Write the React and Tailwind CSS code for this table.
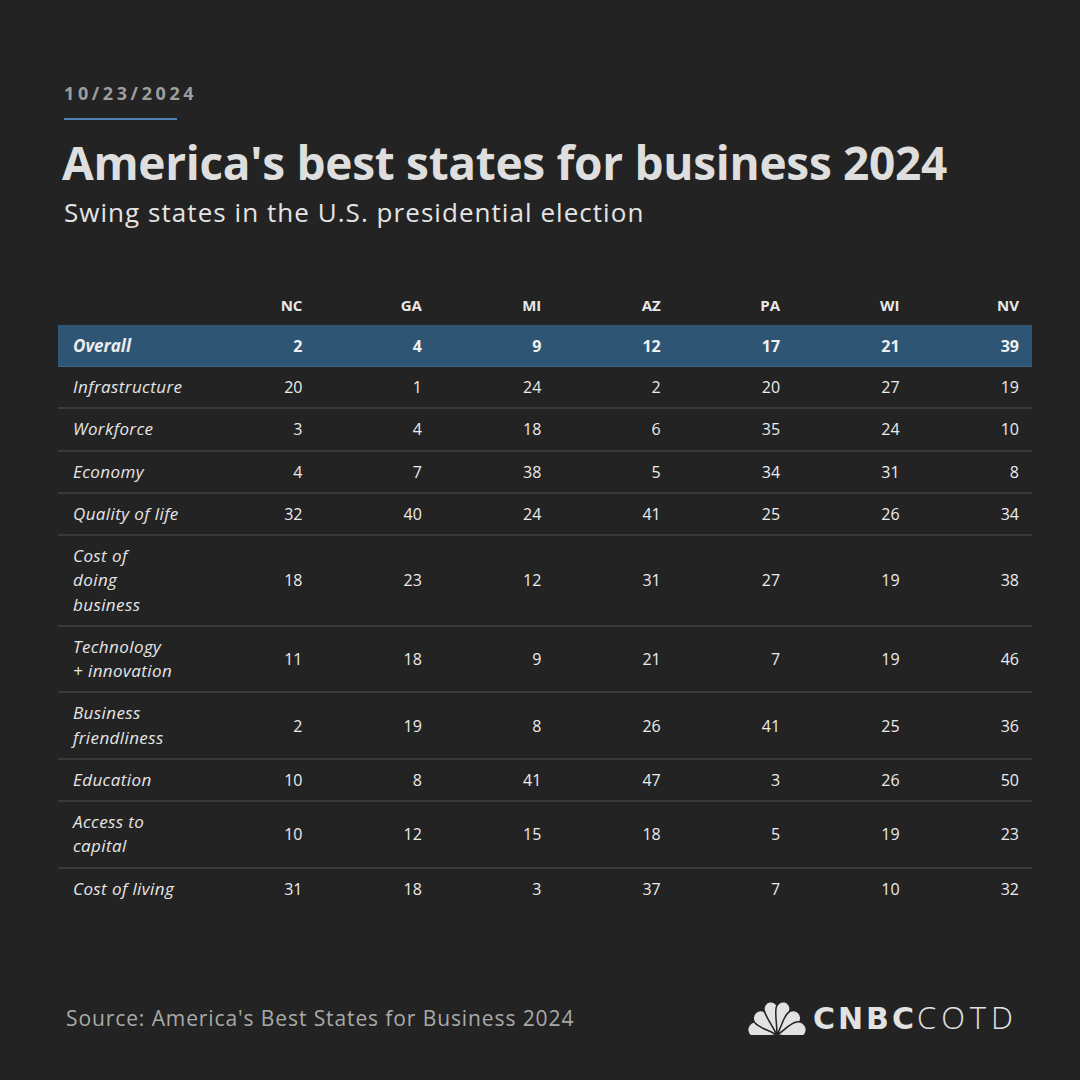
import React from "react";

const states = ["NC", "GA", "MI", "AZ", "PA", "WI", "NV"];

const rows = [
  { label: ["Infrastructure"], values: [20, 1, 24, 2, 20, 27, 19] },
  { label: ["Workforce"], values: [3, 4, 18, 6, 35, 24, 10] },
  { label: ["Economy"], values: [4, 7, 38, 5, 34, 31, 8] },
  { label: ["Quality of life"], values: [32, 40, 24, 41, 25, 26, 34] },
  { label: ["Cost of", "doing", "business"], values: [18, 23, 12, 31, 27, 19, 38] },
  { label: ["Technology", "+ innovation"], values: [11, 18, 9, 21, 7, 19, 46] },
  { label: ["Business", "friendliness"], values: [2, 19, 8, 26, 41, 25, 36] },
  { label: ["Education"], values: [10, 8, 41, 47, 3, 26, 50] },
  { label: ["Access to", "capital"], values: [10, 12, 15, 18, 5, 19, 23] },
  { label: ["Cost of living"], values: [31, 18, 3, 37, 7, 10, 32] },
];

const overall = [2, 4, 9, 12, 17, 21, 39];

function Feather({ angle, len, r }) {
  const d = `M0,0 C${-r * 0.4},${-len * 0.35} ${-r},${-(len - 2 * r)} ${-r},${-(len - r)} A${r},${r} 0 0 1 ${r},${-(len - r)} C${r},${-(len - 2 * r)} ${r * 0.4},${-len * 0.35} 0,0 Z`;
  return <path d={d} transform={`translate(30,34) rotate(${angle})`} fill="#e2e2e2" stroke="#232323" strokeWidth="1.5" />;
}

function Peacock() {
  return (
    <svg width="60" height="34" viewBox="0 0 60 34">
      <Feather angle={-76} len={30} r={8} />
      <Feather angle={-44} len={31} r={7.5} />
      <Feather angle={-13} len={34} r={7} />
      <Feather angle={13} len={34} r={7} />
      <Feather angle={44} len={31} r={7.5} />
      <Feather angle={76} len={30} r={8} />
    </svg>
  );
}

function App() {
  return (
    <div className="w-[1080px] h-[1080px] bg-[#232323] flex flex-col" style={{ fontFamily: "'Open Sans', Lato, sans-serif" }}>
      <div className="pl-[64px] pt-[81px]">
        <div className="text-[18px] leading-[24px] font-bold tracking-[3.6px] text-[#9e9e9e]">10/23/2024</div>
        <div className="mt-[13px] h-[2px] w-[113px] bg-[#4f80b3]" />
        <div className="mt-[14px] -ml-[2px] text-[46px] leading-[56px] font-bold text-[#dedede] tracking-[-0.3px]">
          America's best states for business 2024
        </div>
        <div className="mt-[7px] text-[26px] leading-[30px] text-[#e4e4e4] tracking-[1.05px]">
          Swing states in the U.S. presidential election
        </div>
      </div>

      <div className="mt-[68px] ml-[58px] w-[974px]">
        <div className="grid grid-cols-[138px_repeat(7,1fr)] pb-[10px]">
          <div />
          {states.map((s) => (
            <div key={s} className="text-right pr-[13px] text-[15px] leading-[20px] font-bold text-[#e8e8e8]">
              {s}
            </div>
          ))}
        </div>

        <div className="grid grid-cols-[138px_repeat(7,1fr)] items-center bg-[#2e5674] h-[42px] border-b border-[#3f6784]">
          <div className="pl-[15px] italic font-bold text-[17px] text-[#ececec]">Overall</div>
          {overall.map((v, i) => (
            <div key={i} className="text-right pr-[13px] font-bold text-[16px] text-[#f0f0f0]">
              {v}
            </div>
          ))}
        </div>

        {rows.map((row, idx) => (
          <div
            key={idx}
            className={
              "grid grid-cols-[138px_repeat(7,1fr)] items-center py-2 " +
              (idx < rows.length - 1 ? "border-b-2 border-[#3a3a3a]" : "")
            }
          >
            <div className="pl-[15px] italic font-medium text-[17px] leading-[24.25px] tracking-[0.4px] text-[#e6e6e6]">
              {row.label.map((l, j) => (
                <div key={j}>{l}</div>
              ))}
            </div>
            {row.values.map((v, i) => (
              <div key={i} className="text-right pr-[13px] font-medium text-[16px] text-[#ececec]">
                {v}
              </div>
            ))}
          </div>
        ))}
      </div>

      <div className="mt-auto pb-[44px] pl-[66px] pr-[66px] flex items-center justify-between">
        <div className="text-[21px] leading-[28px] text-[#a9a9a9] tracking-[0.9px]">Source: America's Best States for Business 2024</div>
        <div className="flex items-center gap-[6px]">
          <Peacock />
          <div className="flex items-baseline">
            <span className="text-[30px] leading-[34px] font-black text-[#e2e2e2] tracking-[3px]" style={{ fontFamily: "'DejaVu Sans', sans-serif" }}>
              CNBC
            </span>
            <span className="text-[31px] leading-[34px] font-light text-[#e2e2e2] tracking-[5px] -mr-[4px]" style={{ fontFamily: "'Open Sans', sans-serif" }}>
              COTD
            </span>
          </div>
        </div>
      </div>
    </div>
  );
}

export default App;
